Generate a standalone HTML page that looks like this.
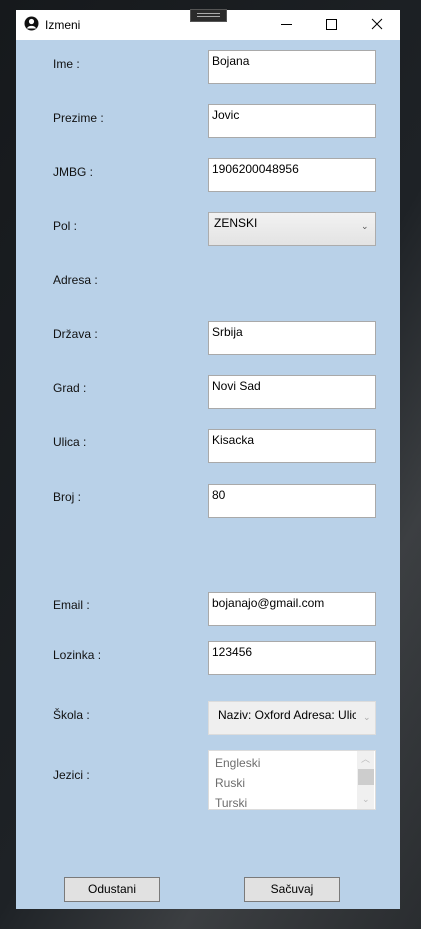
<!DOCTYPE html>
<html><head><style>
body{margin:0;width:421px;height:929px;overflow:hidden;background:linear-gradient(120deg,#16191c 0%,#1e2226 55%,#3c3f42 75%,#2a2d30 100%);font-family:"Liberation Sans",sans-serif;font-size:12px;color:#000;position:relative}
.win{position:absolute;left:16px;top:10px;width:384px;height:899px;background:#b9d1e8}
.tb{position:absolute;left:0;top:0;width:384px;height:30px;background:#fff}
.a{position:absolute}
.lbl{position:absolute;left:37px;font-size:12px;color:#111}
.tx{position:absolute;left:192px;width:166px;height:32px;background:#fff;border:1px solid #a9a9a9;font-size:12px}
.tx span{position:absolute;left:3px;top:3px}
.btn{position:absolute;top:867px;width:94px;height:23px;background:#e1e1e1;border:1px solid #7a7a7a;text-align:center;line-height:23px;font-size:12px}
</style></head><body>
<div class="a" style="left:190px;top:9px;width:35px;height:11px;background:#2b2b2b;border:1px solid #555;z-index:2"><div style="margin:3px 6px;height:2px;border-top:1px solid #aaa;border-bottom:1px solid #aaa"></div></div>
<div class="win">
<div class="tb">
<svg class="a" style="left:8px;top:6px" width="15" height="15" viewBox="0 0 15 15"><circle cx="7.5" cy="7.5" r="7" fill="#111"/><circle cx="7.5" cy="5.5" r="2.6" fill="#fff"/><path d="M2.8 12.5a5 4 0 0 1 9.4 0" fill="#fff"/></svg>
<div class="a" style="left:29px;top:8px;font-size:12px">Izmeni</div>
<div class="a" style="left:265px;top:14px;width:11px;height:1px;background:#000"></div>
<div class="a" style="left:310px;top:9px;width:9px;height:9px;border:1px solid #000"></div>
<svg class="a" style="left:355px;top:8px" width="12" height="12"><path d="M1 1L11 11M11 1L1 11" stroke="#000" stroke-width="1"/></svg>
</div>
<div class="lbl" style="top:47px">Ime :</div>
<div class="lbl" style="top:101px">Prezime :</div>
<div class="lbl" style="top:155px">JMBG :</div>
<div class="lbl" style="top:209px">Pol :</div>
<div class="lbl" style="top:263px">Adresa :</div>
<div class="lbl" style="top:317px">Država :</div>
<div class="lbl" style="top:371px">Grad :</div>
<div class="lbl" style="top:425px">Ulica :</div>
<div class="lbl" style="top:480px">Broj :</div>
<div class="lbl" style="top:588px">Email :</div>
<div class="lbl" style="top:638px">Lozinka :</div>
<div class="lbl" style="top:698px">Škola :</div>
<div class="lbl" style="top:758px">Jezici :</div>
<div class="tx" style="top:40px"><span>Bojana</span></div>
<div class="tx" style="top:94px"><span>Jovic</span></div>
<div class="tx" style="top:148px"><span>1906200048956</span></div>
<div class="tx" style="top:202px;background:linear-gradient(#f2f2f2,#e3e3e3);border-color:#acacac"><span style="left:5px">ZENSKI</span><span style="left:152px;top:8px;font-size:9px;color:#555">⌄</span></div>
<div class="tx" style="top:311px"><span>Srbija</span></div>
<div class="tx" style="top:365px"><span>Novi Sad</span></div>
<div class="tx" style="top:419px"><span>Kisacka</span></div>
<div class="tx" style="top:474px"><span>80</span></div>
<div class="tx" style="top:582px"><span>bojanajo@gmail.com</span></div>
<div class="tx" style="top:631px"><span>123456</span></div>
<div class="tx" style="top:691px;background:#efefef;border-color:#dcdcdc;overflow:hidden"><span style="left:9px;top:6px;white-space:nowrap;width:138px;overflow:hidden">Naziv: Oxford Adresa:  Ulica</span><span style="left:154px;top:10px;font-size:9px;color:#aaa">⌄</span></div>
<div class="tx" style="top:740px;height:58px;border-color:#dcdcdc;color:#6d6d6d">
<span style="left:6px;top:5px">Engleski</span><span style="left:6px;top:25px">Ruski</span><span style="left:6px;top:45px">Turski</span>
<div class="a" style="left:148px;top:0;width:17px;height:58px;background:#f0f0f0"></div>
<div class="a" style="left:149px;top:18px;width:16px;height:16px;background:#cdcdcd"></div>
<span style="left:152px;top:1px;font-size:9px;color:#bbb">︿</span><span style="left:153px;top:43px;font-size:9px;color:#bbb">⌄</span>
</div>
<div class="btn" style="left:48px">Odustani</div>
<div class="btn" style="left:228px">Sačuvaj</div>
</div>
</body></html>
